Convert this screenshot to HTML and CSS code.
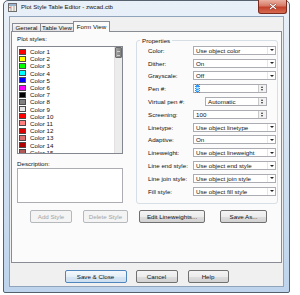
FILE: index.html
```html
<!DOCTYPE html>
<html>
  <head>
    <meta charset="utf-8">
    <title>Plot Style Table Editor</title>
    <link rel="stylesheet" href="styles.css">
  </head>
  <body>
    <div class="window">
      <div class="titlebar">
        <svg class="app-icon" viewBox="0 0 9 9" width="9" height="9">
          <rect x="0.5" y="0.5" width="8" height="8" fill="#f4f1e6" stroke="#6d6d6d"/>
          <rect x="1" y="1" width="7" height="2" fill="#9ab3d1"/>
          <line x1="3" y1="3" x2="3" y2="8" stroke="#8a8a8a" stroke-width="0.7"/>
          <line x1="6" y1="3" x2="6" y2="8" stroke="#8a8a8a" stroke-width="0.7"/>
          <rect x="1.3" y="4" width="1.2" height="1.2" fill="#d33"/>
        </svg>
        <span class="title">Plot Style Table Editor - zwcad.ctb</span>
        <div class="close">
          <svg viewBox="0 0 8 7" width="8" height="7">
            <path d="M1 1 L7 6 M7 1 L1 6" stroke="#6a1b12" stroke-width="2.2"/>
            <path d="M1 1 L7 6 M7 1 L1 6" stroke="#fff" stroke-width="1.2"/>
          </svg>
        </div>
      </div>

      <div class="client">
        <div class="tabs">
          <div class="tab tab-general">General</div>
          <div class="tab tab-table">Table View</div>
          <div class="tab tab-form active">Form View</div>
        </div>

        <div class="panel">
          <div class="panel-body">
            <div class="styles-col">
              <div class="caption">Plot styles:</div>
              <div class="listbox">
                <div class="items">
                  <div class="item"><span class="swatch c1"></span>Color 1</div>
                  <div class="item"><span class="swatch c2"></span>Color 2</div>
                  <div class="item"><span class="swatch c3"></span>Color 3</div>
                  <div class="item"><span class="swatch c4"></span>Color 4</div>
                  <div class="item"><span class="swatch c5"></span>Color 5</div>
                  <div class="item"><span class="swatch c6"></span>Color 6</div>
                  <div class="item"><span class="swatch c7"></span>Color 7</div>
                  <div class="item"><span class="swatch c8"></span>Color 8</div>
                  <div class="item"><span class="swatch c9"></span>Color 9</div>
                  <div class="item"><span class="swatch c10"></span>Color 10</div>
                  <div class="item"><span class="swatch c11"></span>Color 11</div>
                  <div class="item"><span class="swatch c12"></span>Color 12</div>
                  <div class="item"><span class="swatch c13"></span>Color 13</div>
                  <div class="item"><span class="swatch c14"></span>Color 14</div>
                  <div class="item"><span class="swatch c15"></span>Color 15</div>
                </div>
                <div class="vscroll"><div class="thumb"></div></div>
              </div>
              <div class="caption caption-desc">Description:</div>
              <div class="desc"></div>
            </div>

            <fieldset class="props">
              <legend>Properties</legend>
              <div class="row"><label>Color:</label><div class="combo">Use object color<span class="drop"></span></div></div>
              <div class="row"><label>Dither:</label><div class="combo">On<span class="drop"></span></div></div>
              <div class="row"><label>Grayscale:</label><div class="combo">Off<span class="drop"></span></div></div>
              <div class="row"><label>Pen #:</label><div class="spin"><span class="val"><span class="sel">5</span></span><span class="arrows"></span></div></div>
              <div class="row"><label>Virtual pen #:</label><div class="spin spin-virtual"><span class="val">Automatic</span><span class="arrows"></span></div></div>
              <div class="row"><label>Screening:</label><div class="spin"><span class="val">100</span><span class="arrows"></span></div></div>
              <div class="row"><label>Linetype:</label><div class="combo">Use object linetype<span class="drop"></span></div></div>
              <div class="row"><label>Adaptive:</label><div class="combo">On<span class="drop"></span></div></div>
              <div class="row"><label>Lineweight:</label><div class="combo">Use object lineweight<span class="drop"></span></div></div>
              <div class="row"><label>Line end style:</label><div class="combo">Use object end style<span class="drop"></span></div></div>
              <div class="row"><label>Line join style:</label><div class="combo">Use object join style<span class="drop"></span></div></div>
              <div class="row"><label>Fill style:</label><div class="combo">Use object fill style<span class="drop"></span></div></div>
            </fieldset>
          </div>

          <div class="panel-buttons">
            <div class="btn disabled btn-add">Add Style</div>
            <div class="btn disabled btn-delete">Delete Style</div>
            <div class="btn btn-edit">Edit Lineweights...</div>
            <div class="btn btn-saveas">Save As...</div>
          </div>
        </div>

        <div class="footer">
          <div class="btn default btn-save">Save &amp; Close</div>
          <div class="btn btn-cancel">Cancel</div>
          <div class="btn btn-help">Help</div>
        </div>
      </div>
    </div>
  </body>
</html>
```

FILE: styles.css
```css
/* base */
* {
    box-sizing: border-box;
}

body {
    margin: 0;
    width: 300px;
    height: 295px;
    overflow: hidden;
    background: #fff;
    font-family: "Liberation Sans", Arial, sans-serif;
    font-size: 6.2px;
    color: #111;
}

/* window frame */
.window {
    margin-left: 3px;
    width: 287px;
    height: 293px;
    border: 1px solid #56616e;
    border-radius: 5px 5px 2px 2px;
    background: linear-gradient(to bottom, #e9f0f8 0%, #d6e4f3 45%, #bdd4ec 100%);
    display: flex;
    flex-direction: column;
}

.titlebar {
    height: 15px;
    display: flex;
    align-items: flex-start;
    padding-left: 4px;
}

.app-icon {
    margin-top: 2px;
}

.title {
    margin-left: 4px;
    margin-top: 1px;
    font-size: 6.1px;
    line-height: 10px;
}

.close {
    margin-left: auto;
    margin-right: 2px;
    margin-top: -1px;
    width: 29px;
    height: 14px;
    border: 1px solid #7d2a1f;
    border-top: none;
    border-radius: 0 0 3px 3px;
    background: linear-gradient(to bottom, #eab0a2 0%, #d77a66 45%, #c3412c 55%, #d66a50 100%);
    display: flex;
    align-items: center;
    justify-content: center;
}

/* client area */
.client {
    flex: 1;
    margin: 0 5px 5px;
    background: #f0f0f0;
    border: 1px solid #8fa3bc;
    display: flex;
    flex-direction: column;
    padding: 0 1px;
}

.tabs {
    height: 14px;
    padding-top: 4px;
    padding-left: 1px;
    display: flex;
    align-items: flex-end;
    position: relative;
    z-index: 1;
}

.tab {
    height: 8px;
    border: 1px solid #898c95;
    border-bottom: none;
    background: linear-gradient(to bottom, #f6f6f6, #e2e2e2);
    display: flex;
    align-items: center;
    justify-content: center;
    line-height: 7px;
}

.tab-general {
    width: 29px;
}

.tab-table {
    width: 34px;
    margin-left: -1px;
}

.tab-form {
    width: 37px;
    margin-left: -1px;
}

.tab.active {
    height: 11px;
    margin-bottom: -1px;
    background: #fbfbfb;
    padding-bottom: 1px;
}

.panel {
    flex: 1;
    border: 1px solid #898c95;
    background: #fbfbfb;
}

.panel-body {
    display: flex;
    gap: 13px;
    padding: 3px 0 0 5px;
}

/* plot styles list */
.styles-col {
    width: 106px;
}

.caption {
    line-height: 8px;
    height: 8px;
}

.caption-desc {
    margin-top: 6px;
}

.listbox {
    margin-top: 3px;
    height: 108px;
    border: 1px solid #828790;
    background: #fff;
    display: flex;
}

.items {
    flex: 1;
    overflow: hidden;
    padding-top: 1px;
}

.item {
    height: 7.2px;
    display: flex;
    align-items: center;
    padding-left: 1px;
    line-height: 7px;
}

.swatch {
    width: 7px;
    height: 6px;
    border: 1px solid #4a4a4a;
    margin-right: 4px;
}

.c1 { background: #ff0000; }
.c2 { background: #ffff00; }
.c3 { background: #00ff00; }
.c4 { background: #00ffff; }
.c5 { background: #0000ff; }
.c6 { background: #ff00ff; }
.c7 { background: #000000; }
.c8 { background: #808080; }
.c9 { background: #e4e4e4; }
.c10 { background: #ff0000; }
.c11 { background: #ff7f7f; }
.c12 { background: #dd0000; }
.c13 { background: #dd6e6e; }
.c14 { background: #b00000; }
.c15 { background: #b05858; }

.vscroll {
    width: 8px;
    background: #ececec;
    border-left: 1px solid #e2e2e2;
}

.thumb {
    height: 11px;
    border: 1px solid #6b6b6b;
    border-radius: 1px;
    background: linear-gradient(to right, #a3a3a3, #7e7e7e);
    position: relative;
}

.thumb::after {
    content: "";
    position: absolute;
    left: 1px;
    right: 1px;
    top: 3px;
    height: 3px;
    border-top: 1px solid #d0d0d0;
    border-bottom: 1px solid #d0d0d0;
}

.desc {
    height: 35px;
    border: 1px solid #abadb3;
    background: #fff;
}

/* properties group */
.props {
    width: 142px;
    margin: 2px 0 0 0;
    padding: 0 1px 5px 11px;
    border: 1px solid #d5dfe5;
    border-radius: 3px;
}

.props legend {
    padding: 0 2px;
    margin-left: -8px;
    line-height: 7px;
}

.row {
    display: grid;
    grid-template-columns: 45px 1fr;
    align-items: center;
    height: 12.8px;
}

.row label {
    line-height: 7px;
}

.combo {
    height: 9px;
    border: 1px solid #abadb3;
    background: #fff;
    display: flex;
    align-items: center;
    padding-left: 2px;
    line-height: 7px;
}

.drop {
    margin-left: auto;
    width: 8px;
    height: 100%;
    border-left: 1px solid #e6e6e6;
    display: flex;
    align-items: center;
    justify-content: center;
}

.drop::after {
    content: "";
    border-left: 2px solid transparent;
    border-right: 2px solid transparent;
    border-top: 2px solid #222;
}

.spin {
    width: 74px;
    height: 9px;
    border: 1px solid #abadb3;
    background: #fff;
    display: flex;
    align-items: center;
    line-height: 7px;
}

.spin-virtual {
    width: 62px;
    margin-left: 12px;
}

.spin .val {
    flex: 1;
    padding-left: 2px;
}

.sel {
    background: #3399ff;
    color: #fff;
    outline: 1px dotted #777;
}

.arrows {
    width: 8px;
    height: 100%;
    border-left: 1px solid #c9c9c9;
    background: #f2f2f2;
    position: relative;
}

.arrows::before,
.arrows::after {
    content: "";
    position: absolute;
    left: 2px;
    border-left: 1.5px solid transparent;
    border-right: 1.5px solid transparent;
}

.arrows::before {
    top: 1px;
    border-bottom: 2px solid #333;
}

.arrows::after {
    bottom: 1px;
    border-top: 2px solid #333;
}

/* buttons */
.btn {
    height: 13px;
    border: 1px solid #707070;
    border-radius: 2px;
    background: linear-gradient(to bottom, #f4f4f4 0%, #ececec 50%, #dedede 51%, #d2d2d2 100%);
    display: flex;
    align-items: center;
    justify-content: center;
    line-height: 7px;
}

.btn.disabled {
    color: #a3a3a3;
    border-color: #b5b9bc;
    background: #f4f4f4;
}

.btn.default {
    border-color: #4f86bd;
    background: linear-gradient(to bottom, #f3f8fc 0%, #e6eff8 50%, #d7e6f4 51%, #cddff0 100%);
}

.panel-buttons {
    display: flex;
    margin-top: 6px;
    padding-left: 18px;
}

.btn-add {
    width: 42px;
}

.btn-delete {
    width: 45px;
    margin-left: 11px;
}

.btn-edit {
    width: 66px;
    margin-left: 11px;
}

.btn-saveas {
    width: 47px;
    margin-left: 15px;
}

.footer {
    height: 23px;
    padding-top: 7px;
    display: flex;
    justify-content: center;
    gap: 9px;
}

.btn-save {
    width: 62px;
}

.btn-cancel {
    width: 42px;
}

.btn-help {
    width: 41px;
    margin-left: 1px;
}
```
